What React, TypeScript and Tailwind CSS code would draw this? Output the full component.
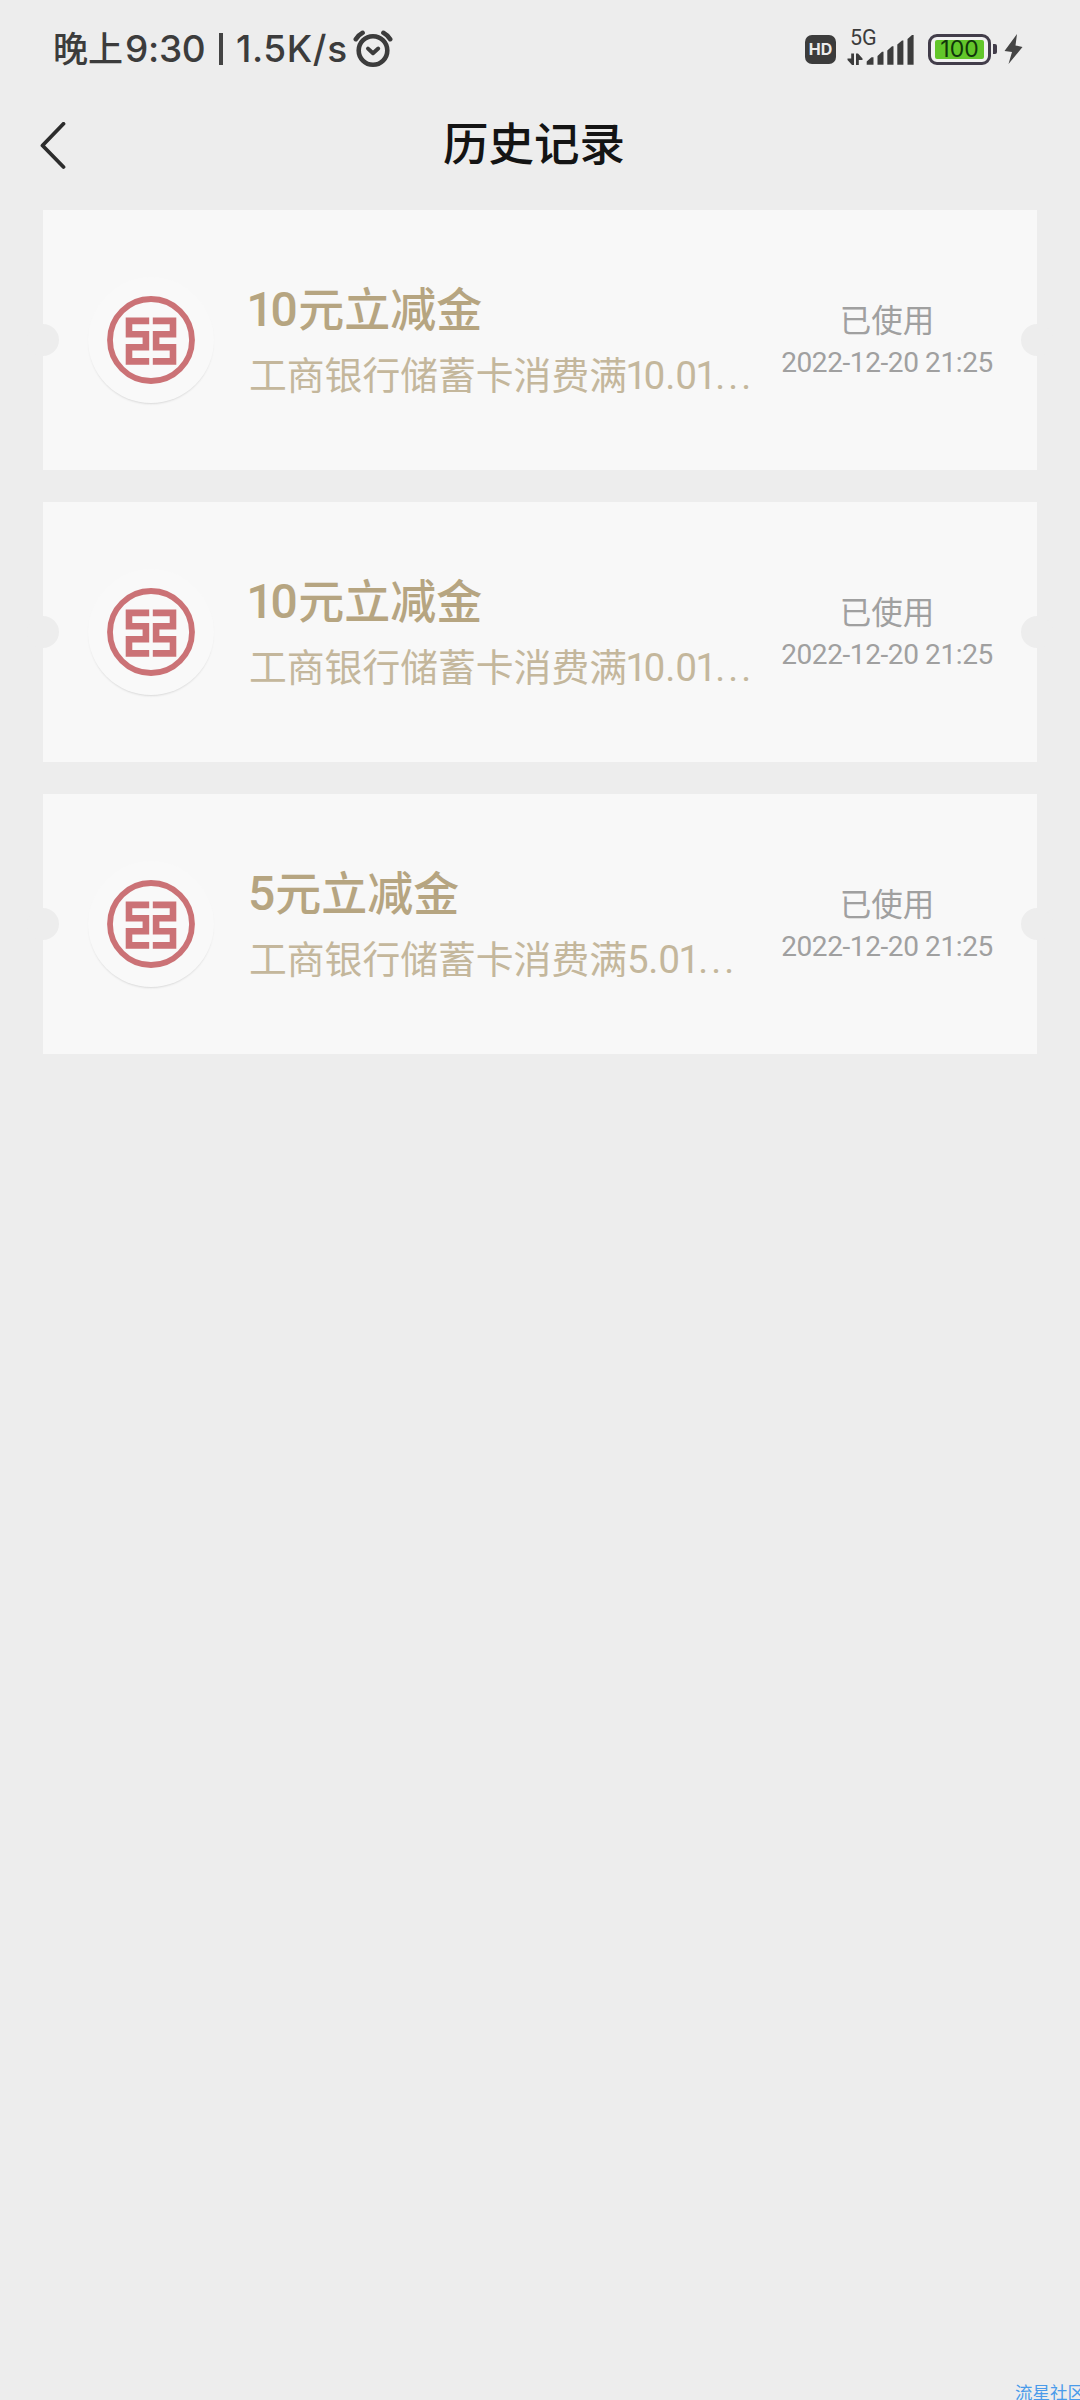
import React from "react";

const COUPONS = [
  { id: 1, amount: "10", limit: "10.01", status: "已使用", time: "2022-12-20 21:25" },
  { id: 2, amount: "10", limit: "10.01", status: "已使用", time: "2022-12-20 21:25" },
  { id: 3, amount: "5", limit: "5.01", status: "已使用", time: "2022-12-20 21:25" },
];

export default function App() {
  return (
    <div className="relative flex h-[2400px] w-[1080px] flex-col overflow-hidden bg-[#ededed] font-[Roboto,'Noto_Sans_CJK_SC',sans-serif]">
      <StatusBar />
      <header className="mb-[17px] flex h-[95px] items-center pl-[40px]">
        <svg width="28" height="48" viewBox="0 0 28 48" fill="none" stroke="#2c2c2c" strokeWidth="3.8" strokeLinecap="round" strokeLinejoin="round">
          <path d="M23.5 1.8 L2.5 23.5 L23.5 45" />
        </svg>
        <h1 className="ml-[375px] text-[45.5px] leading-[60px] font-medium text-[#141414]">历史记录</h1>
      </header>
      <main className="flex flex-col gap-8 px-[43px]">
        {COUPONS.map((coupon) => (
          <CouponCard key={coupon.id} {...coupon} />
        ))}
      </main>
      <div className="absolute top-[2381px] left-[1015px] text-[17.5px] leading-[24px] whitespace-nowrap text-[#4a9bea]">
        流星社区
      </div>
    </div>
  );
}

function StatusBar() {
  return (
    <div className="flex h-[98px] items-center pr-[57px] pl-[53px] text-[#3c3c3c]">
      <div className="flex items-center font-[Inter,'Noto_Sans_CJK_SC',sans-serif] text-[37px] leading-[48px] font-medium whitespace-pre">
        <span className="w-[72px] text-[35px]">晚上</span>
        <span className="w-[81px] tracking-[-0.3px]">9:30</span>
        <span className="mx-[13px] h-[32px] w-[4px] bg-[#444]"></span>
        <span className="w-[117px] tracking-[0.6px]">1.5K/s</span>
      </div>
      <AlarmIcon />
      <div className="ml-auto flex items-center">
        <span className="flex h-[29px] w-[31px] items-center justify-center rounded-[7px] bg-[#3c3c3c] font-[Inter,sans-serif] text-[16px] font-bold text-[#ececec]">
          HD
        </span>
        <Signal />
        <Battery />
        <svg className="ml-[7px]" width="19" height="32" viewBox="0 0 19 32" fill="#444">
          <path d="M13 1 L0.5 18 L8 19 L4.5 31 L18.5 14 L11.5 12.5 Z" />
        </svg>
      </div>
    </div>
  );
}

function AlarmIcon() {
  return (
    <svg width="40" height="38" viewBox="0 0 40 38" fill="none" stroke="#3c3c3c" strokeLinecap="round" strokeLinejoin="round">
      <circle cx="20" cy="20.5" r="14.3" strokeWidth="4.6" />
      <path d="M15 18.6 L20 23.2 L25.2 18.6" strokeWidth="4" />
      <path d="M2.8 9.2 Q5.5 5 9.6 2.8 M30.4 2.8 Q34.5 5 37.2 9.2" strokeWidth="4.6" />
    </svg>
  );
}

function Signal() {
  return (
    <div className="relative ml-[11px] h-[40px] w-[67px]">
      <span className="absolute -top-[3px] left-[3px] font-[Roboto,sans-serif] text-[21.5px] leading-[24px]">5G</span>
      <svg className="absolute inset-0" width="68" height="40" viewBox="0 0 68 40" fill="#3c3c3c">
        <path d="M4.2 24.5 H7 V36 H5 L0.5 31 V29.5 H4.2 Z M9 24.5 H11 L15.5 29.5 V31 H11.8 V36 H9 Z" />
        <path d="M19.7 35.8 V32.5 L24.5 28.3 H26.5 V35.8 Z" />
        <path d="M30.5 35.8 V27 L35 22.8 H36.5 V35.8 Z" />
        <path d="M40.3 35.8 V21.5 L45 17.3 H46.5 V35.8 Z" />
        <path d="M50.3 35.8 V15.5 L55 11.5 H56.4 V35.8 Z" />
        <path d="M60.5 35.8 V10 L65 6 H66.6 V35.8 Z" />
      </svg>
    </div>
  );
}

function Battery() {
  return (
    <div className="ml-[14px] flex items-center">
      <div className="flex h-[31px] w-[63px] items-center justify-center rounded-[9px] border-[3px] border-[#423d4a] bg-[#f1f1f1]">
        <div className="flex h-[19px] w-[49px] items-center justify-center rounded-[2px] bg-[#62c62a] font-[Inter,sans-serif] text-[23px] leading-[19px] text-[#10350a]">
          100
        </div>
      </div>
      <span className="ml-[2px] h-[10px] w-[4px] rounded-r-[2px] bg-[#423d4a]"></span>
    </div>
  );
}

interface CouponProps {
  amount: string;
  limit: string;
  status: string;
  time: string;
}

function CouponCard({ amount, limit, status, time }: CouponProps) {
  return (
    <section className="relative flex h-[260px] bg-[#f8f8f8]">
      <span className="absolute top-[114px] -left-[16px] h-[32px] w-[32px] rounded-full bg-[#ededed]"></span>
      <span className="absolute top-[114px] -right-[16px] h-[32px] w-[32px] rounded-full bg-[#ededed]"></span>
      <div className="mt-[67px] ml-[45px] flex h-[126px] w-[126px] shrink-0 items-center justify-center rounded-full bg-[#f9f9f9] shadow-[0_2px_2px_-1px_#d9d9d9]">
        <BankLogo />
      </div>
      <div className="mt-[70px] ml-[35px] w-[525px] shrink-0 whitespace-nowrap">
        <h2 className="-ml-px text-[46px] leading-[60px] font-medium text-[#b6a581]">
          <span className="text-[48px] proportional-nums">{amount}</span>元立减金
        </h2>
        <p className="mt-[11px] text-[37.8px] leading-[50px] text-[#c4b79c]">
          工商银行储蓄卡消费满<span className="text-[38.5px] tracking-[-0.4px] proportional-nums">{limit}</span>
          <span className="ml-[2px] tracking-[3px]">...</span>
        </p>
      </div>
      <div className="mt-[91px] ml-[3px] w-[220px] text-center whitespace-nowrap text-[#a0a0a0]">
        <div className="text-[31.5px] leading-[42px]">{status}</div>
        <div className="text-[28px] leading-[40px] tracking-[-0.4px]">{time}</div>
      </div>
    </section>
  );
}

function BankLogo() {
  return (
    <svg width="88" height="88" viewBox="0 0 88 88" fill="none">
      <circle cx="44" cy="44" r="41" stroke="#cb7276" strokeWidth="5.8" />
      <g stroke="#cb7276" strokeWidth="6.6">
        <path d="M42.2 24.9 H22 V38.2 H38.9 V51.2 H22 V65.4 H42.2" />
        <path d="M45.8 24.9 H66 V38.2 H49.1 V51.2 H66 V65.4 H45.8" />
      </g>
    </svg>
  );
}
